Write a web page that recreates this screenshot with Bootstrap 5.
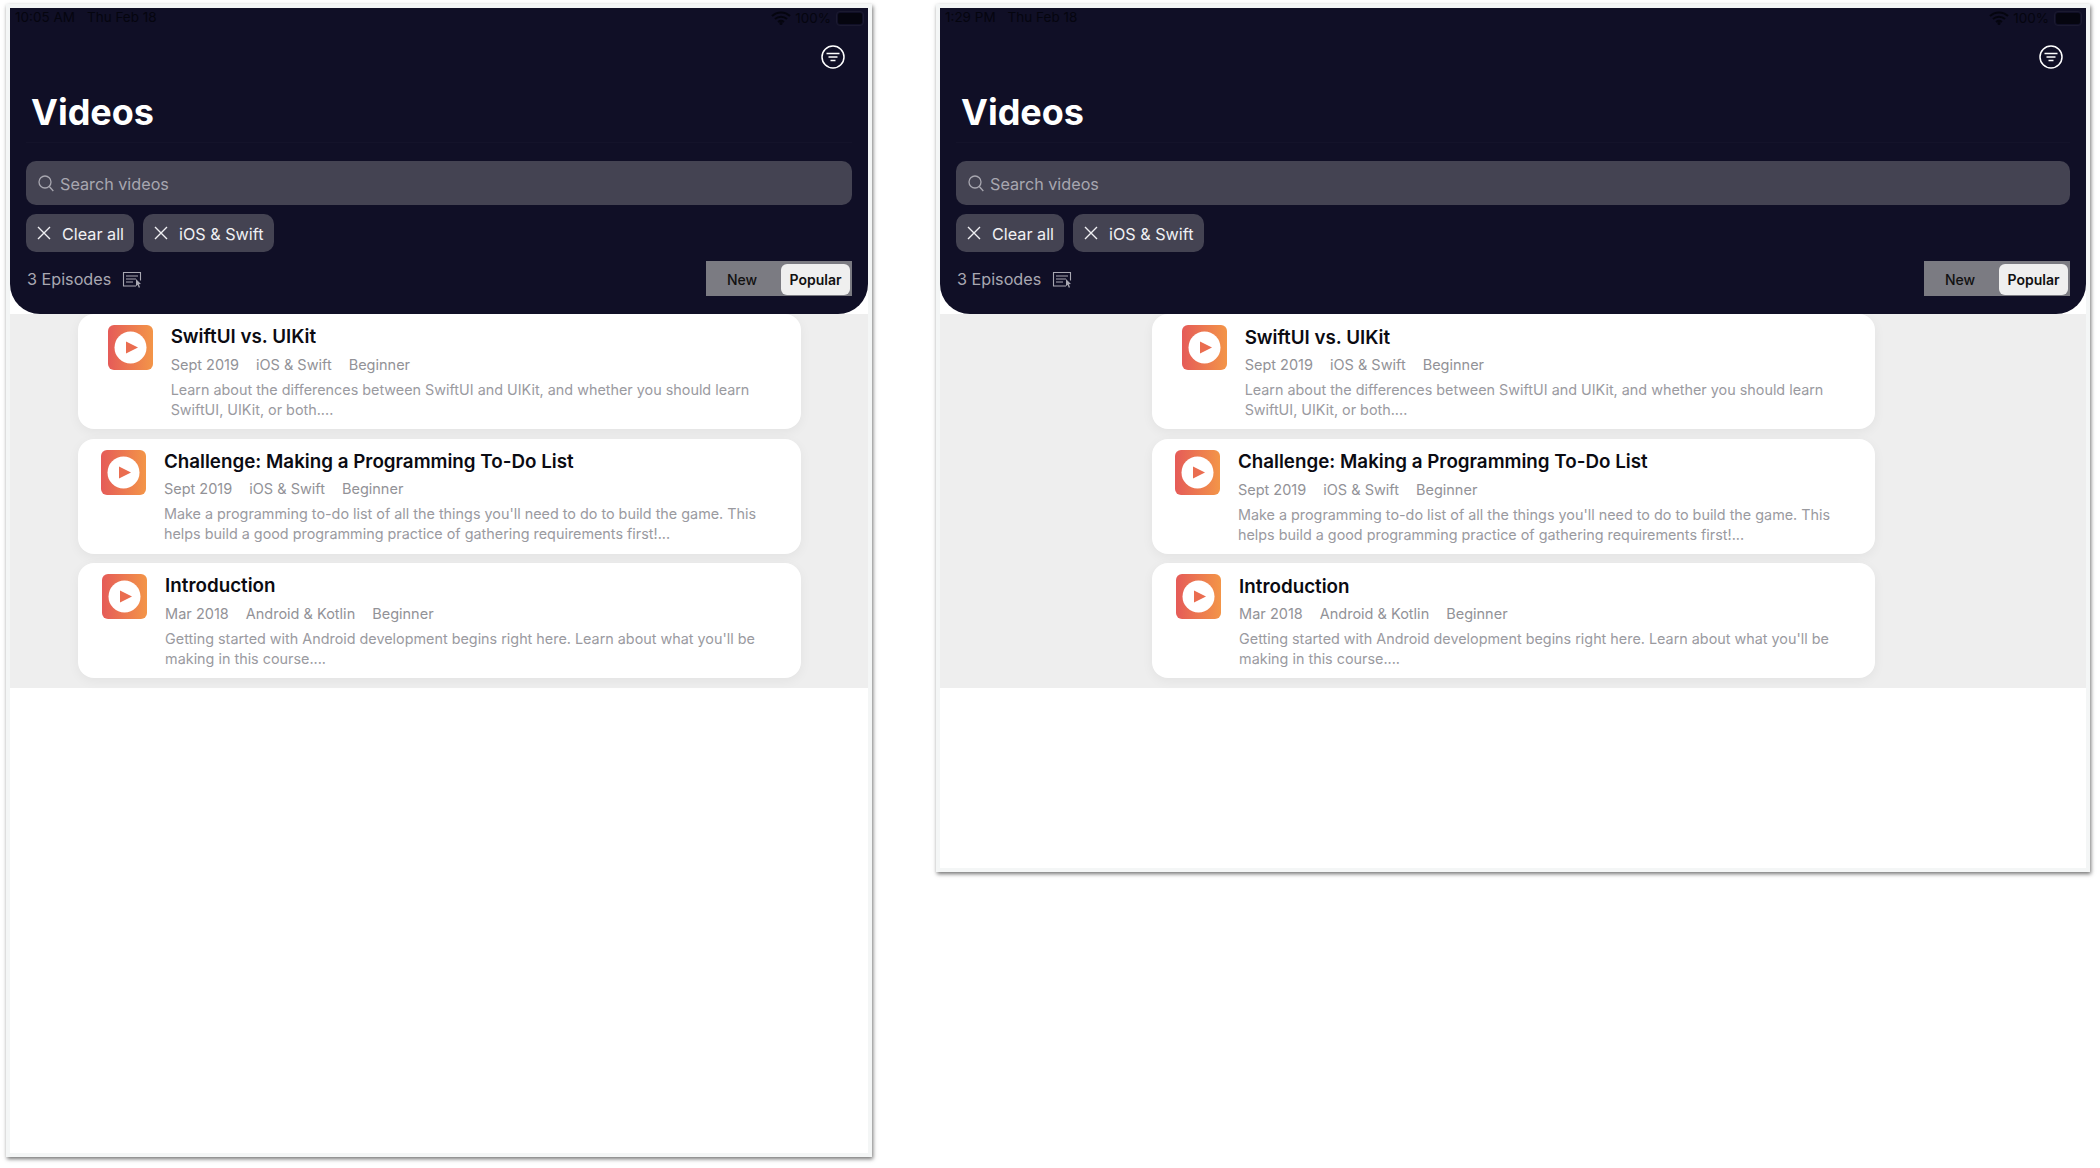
<!DOCTYPE html>
<html lang="en"><head><meta charset="utf-8"><title>Videos</title>
<link href="https://cdn.jsdelivr.net/npm/bootstrap@5.3.0/dist/css/bootstrap.min.css" rel="stylesheet">
<style>
html,body{height:100%;background:#fff;overflow:hidden}
body{font-family:Inter,"Liberation Sans",sans-serif;padding:4px 0 0 6px;gap:64px}
.ipad{border:4px solid #f4f6f6;box-shadow:1px 2px 4px rgba(0,0,0,.55);background:#fff}
.ipad-a{width:866px;height:1153px}
.ipad-b{width:1154px;height:868px}
.hero{background:#100f26;border-radius:0 0 30px 30px;padding:0 16px 18px;height:306px;position:relative;z-index:1}
.status-row{height:20px;padding:0;margin:0 -16px;padding-left:5px;color:#05050f;font-size:13.5px;line-height:19px}
.status-row .when{margin-right:12px}
.status-right{padding-right:2px;gap:4px}
.batt{width:24px;height:11px;background:#05050f;border-radius:2px;outline:1px solid #1b1a30;outline-offset:1px;margin:0 4px 0 3px}
.tool-row{height:30px;padding:17px 7px 0 0}
.title-band{height:85px;padding-left:5px;border-bottom:1px solid #14132a}
.title-band h1{font-size:36px;font-weight:700;color:#fff;line-height:44px;margin:0;padding-top:32px}
.finder{height:44px;background:#444352;border-radius:10px;margin-top:18px;padding:0 12px;gap:6px;color:#a8a7b0;font-size:16.2px}
.chips{margin-top:9px;gap:9px}
.chip-x{height:38px;background:#444352;border-radius:10px;color:#f0f0f3;font-size:16.2px;padding:0 10px;gap:10px}
.finder span,.chip-x span{padding-top:2px}
.count-row{margin-top:9px;height:35px}
.count{color:#a9a8b2;font-size:16.2px;gap:11px;padding:2px 0 0 1px}
.seg{width:146px;height:35px;background:#7b7b82;padding:3px 2px 1px;font-size:14px;font-weight:500}
.seg-new{flex:1;color:#111;text-align:center;line-height:31px;padding-right:5px}
.seg-pop{width:69px;background:#efefef;border-radius:6px;color:#111;text-align:center;line-height:31px;font-weight:600}
.feed{background:#eee;padding:0 0 10px;gap:9.5px;height:auto}
.lesson{width:723px;height:115px;border:0;border-radius:16px;box-shadow:0 3px 12px rgba(0,0,0,.05);padding:11px 21px 0 0}
.thumb{width:45px;height:45px;border-radius:6px;background:linear-gradient(90deg,#e55b58,#f39548);margin-right:18px;flex:none}
.ipad-b .copy{margin-top:.5px}
.lesson h5{font-size:18.8px;font-weight:600;color:#0b0b12;line-height:24px;margin:0 0 5.5px}
.facts{color:#929297;font-size:14.5px;line-height:20px;gap:17px;margin-bottom:5px}
.blurb{color:#9a9a9f;font-size:14.36px;line-height:20px;white-space:nowrap;margin:0}
</style></head>
<body class="d-flex align-items-start">

<section class="ipad ipad-a">
  <header class="hero">
    <div class="status-row d-flex justify-content-between">
      <div><span class="when">10:05 AM</span>Thu Feb 18</div>
      <div class="status-right d-flex align-items-center">
        <svg width="20" height="14" viewBox="0 0 20 14"><path d="M1 5a13 13 0 0 1 18 0M4 8a9 9 0 0 1 12 0M7 11a5 5 0 0 1 6 0" fill="none" stroke="#05050f" stroke-width="2"/><circle cx="10" cy="12.5" r="1.5" fill="#05050f"/></svg>
        <span>100%</span><span class="batt"></span>
      </div>
    </div>
    <div class="tool-row d-flex justify-content-end">
      <svg width="24" height="24" viewBox="0 0 24 24" fill="none" stroke="#fff"><circle cx="12" cy="12" r="11" stroke-width="1.5"/><path d="M5.5 8.5h13M7.5 12h9M9.5 15.5h5" stroke-width="1.5"/></svg>
    </div>
    <div class="title-band"><h1>Videos</h1></div>
    <div class="finder d-flex align-items-center">
      <svg width="16" height="17" viewBox="0 0 16 17" fill="none" stroke="#a8a7b0" stroke-width="1.3"><circle cx="7" cy="7" r="6"/><path d="M11.3 11.5l4 4.5"/></svg>
      <span>Search videos</span>
    </div>
    <div class="chips d-flex">
      <div class="chip-x d-flex align-items-center"><svg width="16" height="16" viewBox="0 0 16 16" stroke="#f0f0f3" stroke-width="1.4"><path d="M2 2l12 12M14 2L2 14"/></svg><span>Clear all</span></div>
      <div class="chip-x d-flex align-items-center"><svg width="16" height="16" viewBox="0 0 16 16" stroke="#f0f0f3" stroke-width="1.4"><path d="M2 2l12 12M14 2L2 14"/></svg><span>iOS &amp; Swift</span></div>
    </div>
    <div class="count-row d-flex justify-content-between align-items-center">
      <div class="count d-flex align-items-center"><span>3 Episodes</span>
        <svg width="21" height="17" viewBox="0 0 21 17" fill="none" stroke="#a9a8b2" stroke-width="1.1"><path d="M14 15H1.5V1.5h17v8"/><path d="M4 5h12M4 8h10M4 11h7"/><path d="M14 8l5 5-2.2.3 1.2 3-1.2.4-1.2-2.9-1.6 1.4z" fill="#a9a8b2" stroke="none"/></svg>
      </div>
      <div class="seg d-flex"><div class="seg-new">New</div><div class="seg-pop">Popular</div></div>
    </div>
  </header>
  <main class="feed d-flex flex-column align-items-center">
    <article class="card lesson flex-row justify-content-center">
      <svg class="thumb" viewBox="0 0 45 45"><circle cx="22.5" cy="22.5" r="16" fill="#fff"/><path d="M18 16.5l12 6-12 6z" fill="#ea6d50"/></svg>
      <div class="copy"><h5>SwiftUI vs. UIKit</h5><div class="facts d-flex"><span>Sept 2019</span><span>iOS &amp; Swift</span><span>Beginner</span></div>
      <p class="blurb">Learn about the differences between SwiftUI and UIKit, and whether you should learn<br>SwiftUI, UIKit, or both....</p></div>
    </article>
    <article class="card lesson flex-row justify-content-center">
      <svg class="thumb" viewBox="0 0 45 45"><circle cx="22.5" cy="22.5" r="16" fill="#fff"/><path d="M18 16.5l12 6-12 6z" fill="#ea6d50"/></svg>
      <div class="copy"><h5>Challenge: Making a Programming To-Do List</h5><div class="facts d-flex"><span>Sept 2019</span><span>iOS &amp; Swift</span><span>Beginner</span></div>
      <p class="blurb">Make a programming to-do list of all the things you'll need to do to build the game. This<br>helps build a good programming practice of gathering requirements first!...</p></div>
    </article>
    <article class="card lesson flex-row justify-content-center">
      <svg class="thumb" viewBox="0 0 45 45"><circle cx="22.5" cy="22.5" r="16" fill="#fff"/><path d="M18 16.5l12 6-12 6z" fill="#ea6d50"/></svg>
      <div class="copy"><h5>Introduction</h5><div class="facts d-flex"><span>Mar 2018</span><span>Android &amp; Kotlin</span><span>Beginner</span></div>
      <p class="blurb">Getting started with Android development begins right here. Learn about what you'll be<br>making in this course....</p></div>
    </article>
  </main>
</section>

<section class="ipad ipad-b">
  <header class="hero">
    <div class="status-row d-flex justify-content-between">
      <div><span class="when">1:29 PM</span>Thu Feb 18</div>
      <div class="status-right d-flex align-items-center">
        <svg width="20" height="14" viewBox="0 0 20 14"><path d="M1 5a13 13 0 0 1 18 0M4 8a9 9 0 0 1 12 0M7 11a5 5 0 0 1 6 0" fill="none" stroke="#05050f" stroke-width="2"/><circle cx="10" cy="12.5" r="1.5" fill="#05050f"/></svg>
        <span>100%</span><span class="batt"></span>
      </div>
    </div>
    <div class="tool-row d-flex justify-content-end">
      <svg width="24" height="24" viewBox="0 0 24 24" fill="none" stroke="#fff"><circle cx="12" cy="12" r="11" stroke-width="1.5"/><path d="M5.5 8.5h13M7.5 12h9M9.5 15.5h5" stroke-width="1.5"/></svg>
    </div>
    <div class="title-band"><h1>Videos</h1></div>
    <div class="finder d-flex align-items-center">
      <svg width="16" height="17" viewBox="0 0 16 17" fill="none" stroke="#a8a7b0" stroke-width="1.3"><circle cx="7" cy="7" r="6"/><path d="M11.3 11.5l4 4.5"/></svg>
      <span>Search videos</span>
    </div>
    <div class="chips d-flex">
      <div class="chip-x d-flex align-items-center"><svg width="16" height="16" viewBox="0 0 16 16" stroke="#f0f0f3" stroke-width="1.4"><path d="M2 2l12 12M14 2L2 14"/></svg><span>Clear all</span></div>
      <div class="chip-x d-flex align-items-center"><svg width="16" height="16" viewBox="0 0 16 16" stroke="#f0f0f3" stroke-width="1.4"><path d="M2 2l12 12M14 2L2 14"/></svg><span>iOS &amp; Swift</span></div>
    </div>
    <div class="count-row d-flex justify-content-between align-items-center">
      <div class="count d-flex align-items-center"><span>3 Episodes</span>
        <svg width="21" height="17" viewBox="0 0 21 17" fill="none" stroke="#a9a8b2" stroke-width="1.1"><path d="M14 15H1.5V1.5h17v8"/><path d="M4 5h12M4 8h10M4 11h7"/><path d="M14 8l5 5-2.2.3 1.2 3-1.2.4-1.2-2.9-1.6 1.4z" fill="#a9a8b2" stroke="none"/></svg>
      </div>
      <div class="seg d-flex"><div class="seg-new">New</div><div class="seg-pop">Popular</div></div>
    </div>
  </header>
  <main class="feed d-flex flex-column align-items-center">
    <article class="card lesson flex-row justify-content-center">
      <svg class="thumb" viewBox="0 0 45 45"><circle cx="22.5" cy="22.5" r="16" fill="#fff"/><path d="M18 16.5l12 6-12 6z" fill="#ea6d50"/></svg>
      <div class="copy"><h5>SwiftUI vs. UIKit</h5><div class="facts d-flex"><span>Sept 2019</span><span>iOS &amp; Swift</span><span>Beginner</span></div>
      <p class="blurb">Learn about the differences between SwiftUI and UIKit, and whether you should learn<br>SwiftUI, UIKit, or both....</p></div>
    </article>
    <article class="card lesson flex-row justify-content-center">
      <svg class="thumb" viewBox="0 0 45 45"><circle cx="22.5" cy="22.5" r="16" fill="#fff"/><path d="M18 16.5l12 6-12 6z" fill="#ea6d50"/></svg>
      <div class="copy"><h5>Challenge: Making a Programming To-Do List</h5><div class="facts d-flex"><span>Sept 2019</span><span>iOS &amp; Swift</span><span>Beginner</span></div>
      <p class="blurb">Make a programming to-do list of all the things you'll need to do to build the game. This<br>helps build a good programming practice of gathering requirements first!...</p></div>
    </article>
    <article class="card lesson flex-row justify-content-center">
      <svg class="thumb" viewBox="0 0 45 45"><circle cx="22.5" cy="22.5" r="16" fill="#fff"/><path d="M18 16.5l12 6-12 6z" fill="#ea6d50"/></svg>
      <div class="copy"><h5>Introduction</h5><div class="facts d-flex"><span>Mar 2018</span><span>Android &amp; Kotlin</span><span>Beginner</span></div>
      <p class="blurb">Getting started with Android development begins right here. Learn about what you'll be<br>making in this course....</p></div>
    </article>
  </main>
</section>
<script src="https://cdn.jsdelivr.net/npm/bootstrap@5.3.0/dist/js/bootstrap.bundle.min.js"></script>
</body></html>
